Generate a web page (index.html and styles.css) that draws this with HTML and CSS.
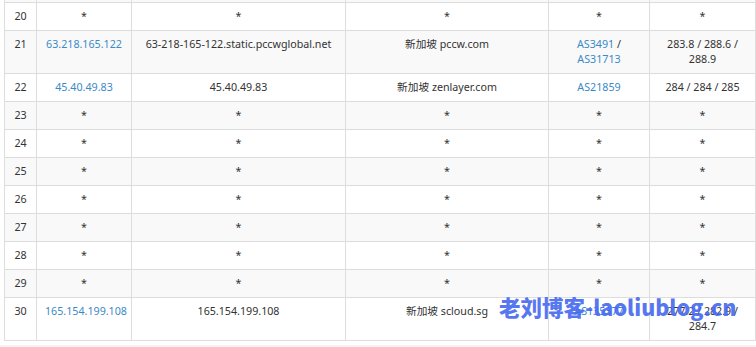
FILE: index.html
```html
<!DOCTYPE html>
<html lang="zh-CN">
<head>
<meta charset="utf-8">
<link rel="stylesheet" href="styles.css">
</head>
<body>
<div class="page">
  <div class="wrap">
    <table class="trace">
      <colgroup>
        <col class="c-hop"><col class="c-ip"><col class="c-host"><col class="c-loc"><col class="c-as"><col class="c-lat">
      </colgroup>
      <tbody>
        <tr class="odd"><td></td><td></td><td></td><td></td><td></td><td></td></tr>
        <tr><td>20</td><td>*</td><td>*</td><td>*</td><td>*</td><td>*</td></tr>
        <tr class="odd"><td>21</td><td><a href="#">63.218.165.122</a></td><td>63-218-165-122.static.pccwglobal.net</td><td>新加坡 pccw.com</td><td><a href="#">AS3491</a> /<br><a href="#">AS31713</a></td><td>283.8 / 288.6 / 288.9</td></tr>
        <tr><td>22</td><td><a href="#">45.40.49.83</a></td><td>45.40.49.83</td><td>新加坡 zenlayer.com</td><td><a href="#">AS21859</a></td><td>284 / 284 / 285</td></tr>
        <tr class="odd"><td>23</td><td>*</td><td>*</td><td>*</td><td>*</td><td>*</td></tr>
        <tr><td>24</td><td>*</td><td>*</td><td>*</td><td>*</td><td>*</td></tr>
        <tr class="odd"><td>25</td><td>*</td><td>*</td><td>*</td><td>*</td><td>*</td></tr>
        <tr><td>26</td><td>*</td><td>*</td><td>*</td><td>*</td><td>*</td></tr>
        <tr class="odd"><td>27</td><td>*</td><td>*</td><td>*</td><td>*</td><td>*</td></tr>
        <tr><td>28</td><td>*</td><td>*</td><td>*</td><td>*</td><td>*</td></tr>
        <tr class="odd"><td>29</td><td>*</td><td>*</td><td>*</td><td>*</td><td>*</td></tr>
        <tr><td>30</td><td><a href="#">165.154.199.108</a></td><td>165.154.199.108</td><td>新加坡 scloud.sg</td><td><a href="#">AS135377</a></td><td>277.2 / 282.9 / 284.7</td></tr>
      </tbody>
    </table>
    <div class="watermark">老刘博客-laoliublog.cn</div>
  </div>
  <div class="footer-band"></div>
</div>
</body>
</html>
```

FILE: styles.css
```css
html, body {
  margin: 0;
  padding: 0;
  background: #ffffff;
}
.page {
  width: 756px;
  height: 347px;
  overflow: hidden;
  font-family: "Noto Sans", "Noto Sans CJK SC", sans-serif;
  font-size: 10.7px;
  color: #333333;
}
.wrap {
  position: relative;
  margin: -26px 2px 0 4px;
}
.trace {
  width: 751px;
  border-collapse: collapse;
  table-layout: fixed;
}
.c-hop { width: 32px; }
.c-ip { width: 95px; }
.c-host { width: 214px; }
.c-loc { width: 203px; }
.c-as { width: 101px; }
.c-lat { width: 106px; }
.trace td {
  border: 1px solid #dddddd;
  padding: 6px 8px;
  height: 15px;
  line-height: 15px;
  text-align: center;
  vertical-align: top;
  white-space: normal;
}
.trace tr.odd td {
  background: #f9f9f9;
}
.trace a {
  color: #3a8ac8;
  text-decoration: none;
}
.watermark {
  position: absolute;
  left: 495px;
  bottom: 22px;
  font-family: "Noto Sans CJK SC", "Noto Sans", sans-serif;
  font-weight: 900;
  font-size: 21.5px;
  line-height: 24px;
  color: rgba(70, 106, 240, 0.92);
  white-space: nowrap;
}
.footer-band {
  margin-top: 4px;
  height: 4px;
  background: #f4f4f4;
}
```
